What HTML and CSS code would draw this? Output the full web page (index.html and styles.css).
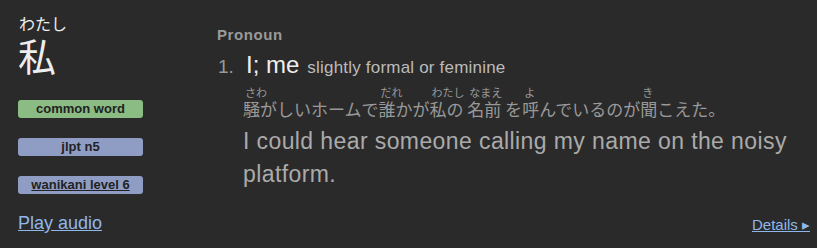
FILE: index.html
```html
<!DOCTYPE html>
<html lang="ja">
<head>
    <meta charset="UTF-8">
    <title>私 - Jisho</title>
    <link rel="stylesheet" href="styles.css">
</head>
<body>
    <div class="entry">
        <div class="concept">
            <div class="representation">
                <span class="furigana">わたし</span>
                <span class="word">私</span>
            </div>
            <div class="tags">
                <span class="tag common">common word</span>
                <span class="tag">jlpt n5</span>
                <a class="tag" href="#">wanikani level 6</a>
            </div>
            <a class="audio" href="#">Play audio</a>
        </div>
        <div class="meanings">
            <div class="meaning-tags">Pronoun</div>
            <div class="meaning">
                <span class="divider">1.</span>
                <span class="meaning-text">I; me</span>
                <span class="supplemental">slightly formal or feminine</span>
            </div>
            <div class="sentence">
                <div class="japanese"><span class="w"><span class="f">さわ</span>騒</span>がしいホームで<span class="w"><span class="f">だれ</span>誰</span>かが<span class="w"><span class="f">わたし</span>私</span>の <span class="w"><span class="f">なまえ</span>名前</span> を<span class="w"><span class="f">よ</span>呼</span>んでいるのが<span class="w"><span class="f">き</span>聞</span>こえた。</div>
                <div class="english">I could hear someone calling my name on the noisy platform.</div>
            </div>
            <a class="details" href="#">Details ▸</a>
        </div>
    </div>
</body>
</html>
```

FILE: styles.css
```css
body {
    margin: 0;
    background-color: #2a2a2a;
    font-family: "Liberation Sans", Arial, "Noto Sans CJK JP", sans-serif;
    color: #aaa;
}
a {
    color: #8fb8e8;
}
.entry {
    display: flex;
    padding: 10px 7px 0 18px;
    height: 238px;
}
.concept {
    width: 199px;
    flex-shrink: 0;
}
.representation {
    display: flex;
    flex-direction: column;
    color: #eee;
    font-family: "Noto Sans CJK JP", sans-serif;
}
.representation .furigana {
    font-size: 16px;
    line-height: 20px;
    padding: 3px 0 0 1px;
}
.representation .word {
    font-size: 38px;
    line-height: 43px;
}
.tags {
    display: flex;
    flex-direction: column;
    gap: 20px;
    margin-top: 24px;
    width: 125px;
}
.tag {
    display: block;
    height: 18px;
    line-height: 18px;
    border-radius: 3px;
    background-color: #8f9dc5;
    color: #222;
    font-size: 13px;
    font-weight: bold;
    text-align: center;
}
.tag.common {
    background-color: #8abc83;
}
.audio {
    display: inline-block;
    margin-top: 19px;
    font-size: 18px;
}
.meanings {
    flex: 1;
    display: flex;
    flex-direction: column;
}
.meaning-tags {
    font-size: 15px;
    font-weight: bold;
    letter-spacing: 0.6px;
    color: #9a9a9a;
    margin-top: 16px;
    line-height: 18px;
}
.meaning {
    margin-top: 9px;
    line-height: 24px;
    display: flex;
    align-items: baseline;
}
.divider {
    font-size: 19px;
    color: #999;
    width: 28px;
    padding-left: 1px;
}
.meaning-text {
    font-size: 24px;
    color: #eee;
    margin-right: 8px;
}
.supplemental {
    font-size: 17px;
    letter-spacing: 0.2px;
    color: #bbb;
}
.sentence {
    padding-left: 26px;
    margin-top: 6px;
}
.japanese {
    font-family: "Noto Sans CJK JP", sans-serif;
    font-size: 17px;
    color: #999;
    line-height: 22px;
    white-space: nowrap;
}
.japanese .w {
    display: inline-block;
}
.japanese .f {
    display: block;
    width: 0;
    white-space: nowrap;
    font-size: 11px;
    line-height: 12px;
    padding-left: 2px;
}
.english {
    font-size: 23px;
    letter-spacing: 0.4px;
    line-height: 33px;
    color: #aaa;
    margin-top: 5px;
}
.details {
    margin-top: auto;
    margin-bottom: 14px;
    align-self: flex-end;
    font-size: 15px;
}
```
